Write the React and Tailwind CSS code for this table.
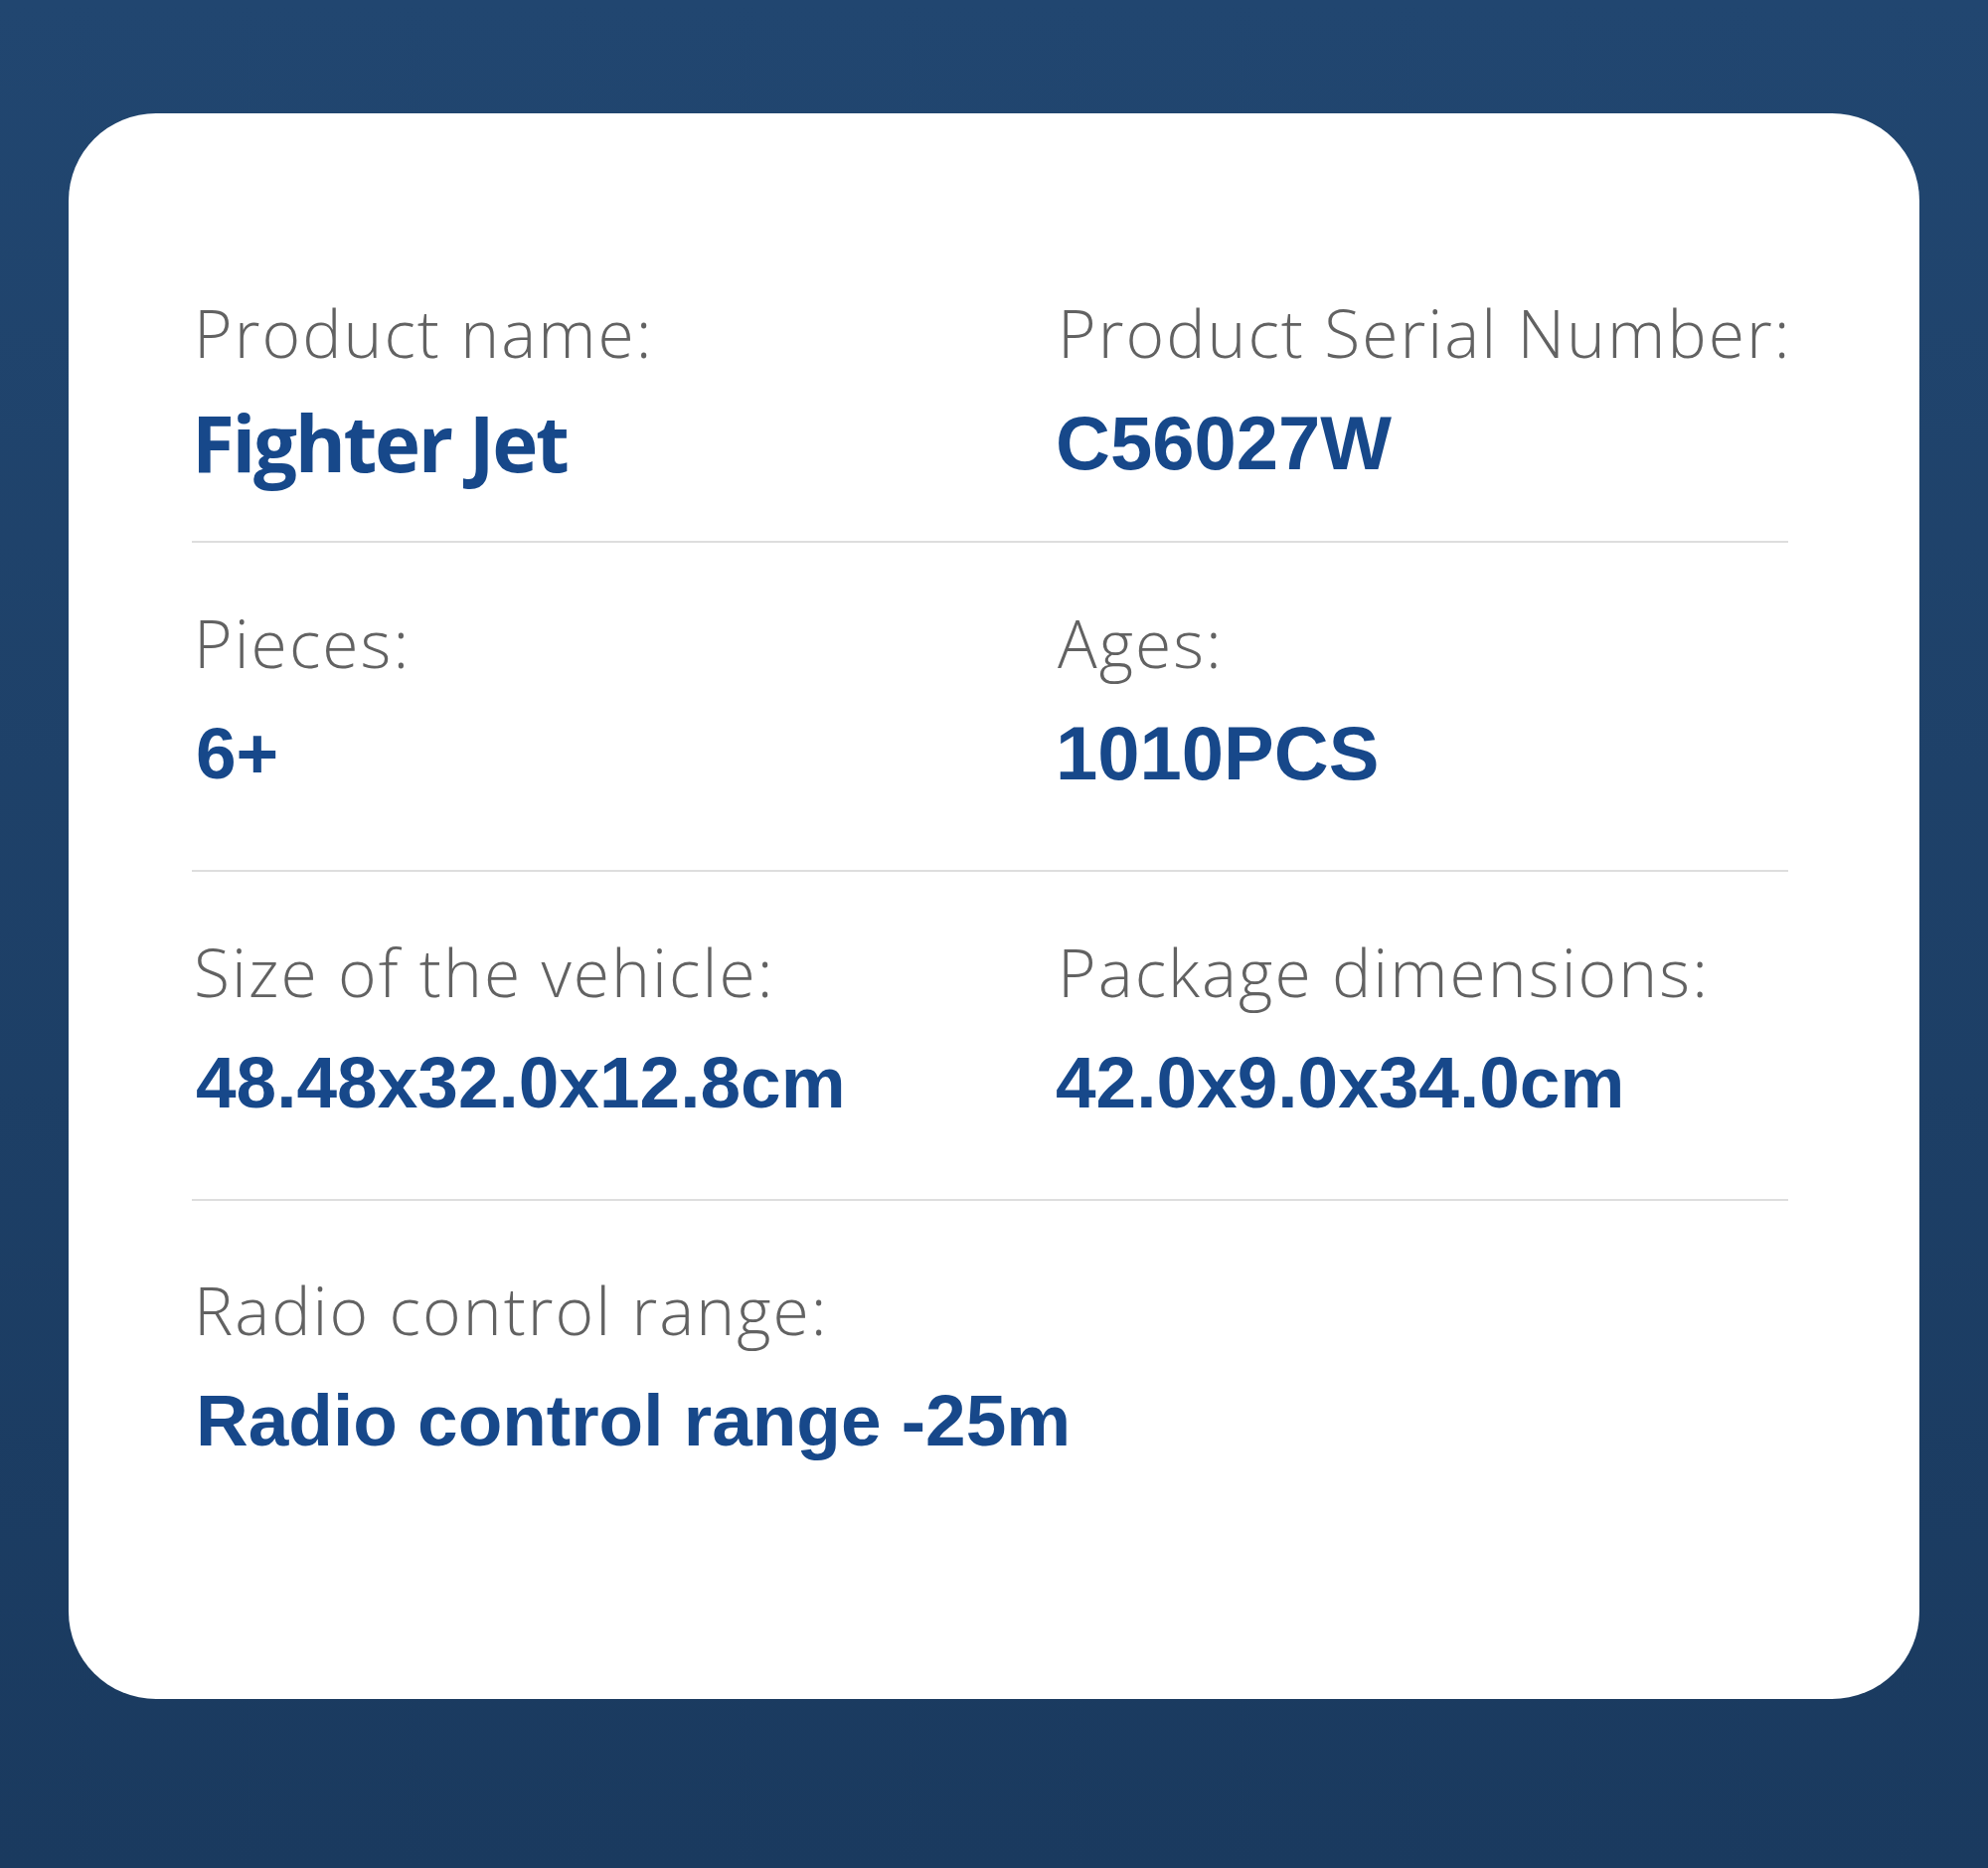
import React from 'react';

const rows = [
  [
    { label: 'Product name:', value: 'Fighter Jet', kind: 'humanist' },
    { label: 'Product Serial Number:', value: 'C56027W', kind: 'wide' },
  ],
  [
    { label: 'Pieces:', value: '6+', kind: 'left' },
    { label: 'Ages:', value: '1010PCS', kind: 'wide' },
  ],
  [
    { label: 'Size of the vehicle:', value: '48.48x32.0x12.8cm', kind: 'left' },
    { label: 'Package dimensions:', value: '42.0x9.0x34.0cm', kind: 'right' },
  ],
  [{ label: 'Radio control range:', value: 'Radio control range -25m', kind: 'left' }],
];

const valueClass = {
  humanist:
    "font-['Open_Sans',sans-serif] font-bold text-[78px] leading-[83px] tracking-[-0.03em]",
  wide: "font-['Liberation_Sans',Arial,sans-serif] font-bold text-[76px] leading-[83px]",
  left: "pl-[4px] font-['Liberation_Sans',Arial,sans-serif] font-bold text-[73px] leading-[83px]",
  right: "font-['Liberation_Sans',Arial,sans-serif] font-bold text-[73px] leading-[83px]",
};

function Field({ label, value, kind }) {
  return (
    <div className="flex flex-col">
      <div className="pl-[2px] font-['Open_Sans',sans-serif] font-light text-[66px] leading-[78px] tracking-[0.031em] text-[#626262] whitespace-nowrap">
        {label}
      </div>
      <div className={`mt-[31px] text-[#17488a] whitespace-nowrap ${valueClass[kind]}`}>{value}</div>
    </div>
  );
}

export default function App() {
  return (
    <div className="min-h-[1879px] bg-gradient-to-b from-[#214670] to-[#1a3a5f] px-[69px] pt-[114px]">
      <div className="bg-white rounded-[88px] pl-[124px] pr-[132px] pt-[181px] pb-[239px]">
        {rows.map((row, i) => (
          <div
            key={i}
            className={
              i === rows.length - 1
                ? 'grid grid-cols-[869px_1fr] pt-[70px]'
                : i === 0
                ? 'grid grid-cols-[869px_1fr] pb-[57px] border-b-2 border-[#dedede]'
                : 'grid grid-cols-[869px_1fr] pt-[61px] pb-[76px] border-b-2 border-[#dedede]'
            }
          >
            {row.map((f) => (
              <Field key={f.label} {...f} />
            ))}
          </div>
        ))}
      </div>
    </div>
  );
}
